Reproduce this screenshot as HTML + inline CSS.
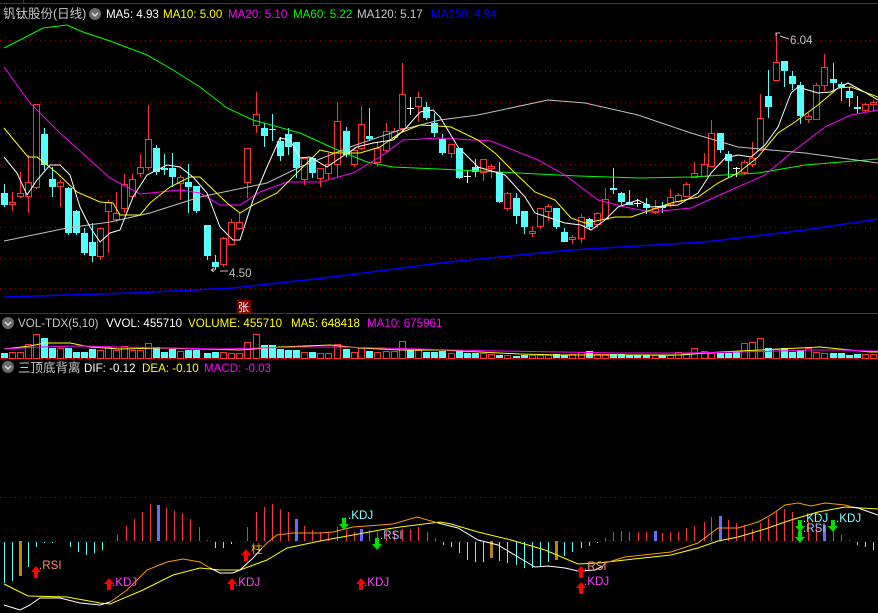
<!DOCTYPE html>
<html><head><meta charset="utf-8">
<style>
html,body{margin:0;padding:0;background:#000;width:878px;height:613px;overflow:hidden}
svg{display:block;font-family:"Liberation Sans","Noto Sans CJK SC",sans-serif}
</style></head>
<body>
<svg id="s" width="878" height="613" xmlns="http://www.w3.org/2000/svg">
<rect width="878" height="613" fill="#000"/>
<line x1="0" y1="3.5" x2="878" y2="3.5" stroke="#c00000"/>
<line x1="23.5" y1="0" x2="23.5" y2="4" stroke="#c00000"/>
<line x1="0" y1="313.5" x2="878" y2="313.5" stroke="#c00000"/>
<line x1="0" y1="358.5" x2="878" y2="358.5" stroke="#c00000"/>
<g id="g"></g>
<!-- header -->
<text x="3" y="18" font-size="12.5" fill="#c8c8c8">钒钛股份(日线)</text>
<circle cx="95" cy="14" r="6" fill="#6a6a6a"/><path d="M92 13l3 3 3-3" stroke="#ddd" stroke-width="1.4" fill="none"/>
<g font-size="11.6">
<text x="106" y="18" fill="#fff">MA5: 4.93</text>
<text x="163" y="18" fill="#ffff00">MA10: 5.00</text>
<text x="228" y="18" fill="#ff00ff">MA20: 5.10</text>
<text x="293" y="18" fill="#00ff00">MA60: 5.22</text>
<text x="357" y="18" fill="#c8c8c8">MA120: 5.17</text>
<text x="431" y="18" fill="#0000ff">MA250: 4.94</text>
<text x="229" y="277" fill="#c0c0c0">4.50</text>
<text x="790" y="44" fill="#c0c0c0">6.04</text>
</g>
<path d="M215 270h-4m0 0l3-2m-3 2l3 2M220 271h8" stroke="#c0c0c0" fill="none"/>
<path d="M776 36v-3h4M780 36l9 3" stroke="#c0c0c0" fill="none"/>
<rect x="237" y="300" width="14" height="13" fill="#800000"/>
<text x="238" y="311" font-size="11" fill="#fff">张</text>
<!-- vol header -->
<circle cx="8" cy="323" r="6" fill="#6a6a6a"/><path d="M5 322l3 3 3-3" stroke="#ddd" stroke-width="1.4" fill="none"/>
<g font-size="11.6">
<text x="18" y="327" fill="#c8c8c8">VOL-TDX(5,10)</text>
<text x="106" y="327" fill="#fff">VVOL: 455710</text>
<text x="188" y="327" fill="#ffff00">VOLUME: 455710</text>
<text x="291" y="327" fill="#ffff00">MA5: 648418</text>
<text x="367" y="327" fill="#ff00ff">MA10: 675961</text>
</g>
<circle cx="8" cy="367" r="6" fill="#6a6a6a"/><path d="M5 366l3 3 3-3" stroke="#ddd" stroke-width="1.4" fill="none"/>
<text x="18" y="372" font-size="12.5" fill="#c8c8c8">三顶底背离</text>
<g font-size="11.6">
<text x="84" y="372" fill="#fff">DIF: -0.12</text>
<text x="142" y="372" fill="#ffff00">DEA: -0.10</text>
<text x="204" y="372" fill="#ff00ff">MACD: -0.03</text>
</g>
<g id="m" font-size="11.6"></g>
</svg>
<script>
var g=document.getElementById('g'),h='';
function L(x1,y1,x2,y2,c,w,d){h+='<line x1="'+x1+'" y1="'+y1+'" x2="'+x2+'" y2="'+y2+'" stroke="'+c+'" stroke-width="'+(w||1)+'"'+(d?' stroke-dasharray="'+d+'"':'')+'/>';}
// grid
[40,71,102,133,164,196,227,258,288].forEach(function(y){L(0,y+.5,878,y+.5,'#a00000',1,'1 4');});
L(0,341.5,878,341.5,'#a00000',1,'1 4');
L(0,497.5,878,497.5,'#a00000',1,'1 4');
L(0,541.5,878,541.5,'#a00000',1,'1 4');
function P(pts,c,w){h+='<polyline points="'+pts+'" fill="none" stroke="'+c+'" stroke-width="'+(w||1)+'"/>';}
// candles: [x,type(r/c/w),top,bot,hi,lo]
var C=[[4,'c',193,205,184,207],[12,'r',202,204,192,211],[20,'r',193,196,172,198],[28,'r',182,196,155,213],[36,'r',104,187,104,189],[44,'c',134,165,128,170],[52,'c',179,187,167,197],[60,'r',182,186,180,207],[68,'c',188,233,187,235],[76,'c',211,233,210,235],[84,'c',233,253,228,255],[92,'c',242,256,223,262],[100,'r',228,256,228,260],[108,'r',202,211,200,253],[116,'r',213,219,192,222],[124,'r',184,208,174,213],[132,'r',179,196,174,198],[140,'r',167,173,154,177],[148,'r',139,167,105,170],[156,'c',148,172,145,175],[164,'c',168,170,154,175],[172,'c',168,177,153,187],[180,'r',177,183,175,200],[188,'c',182,187,164,213],[196,'c',186,211,186,213],[207,'c',225,256,225,260],[215,'c',262,267,255,270],[223,'r',238,264,237,267],[231,'r',222,244,219,245],[239,'r',222,228,213,230],[247,'r',148,182,148,198],[256,'r',114,125,92,133],[264,'c',128,136,123,147],[272,'c',129,130,114,141],[280,'c',141,156,137,161],[288,'c',134,147,128,155],[296,'c',142,168,142,178],[304,'r',158,179,158,185],[312,'c',158,173,157,178],[320,'r',168,178,168,187],[328,'r',164,173,153,180],[337,'r',121,164,102,178],[346,'c',131,155,127,157],[354,'r',150,164,147,167],[361,'r',124,148,106,150],[369,'c',136,139,108,141],[377,'r',148,162,142,167],[386,'r',131,150,123,153],[394,'r',131,137,128,140],[402,'r',94,128,63,132],[410,'w',108,108,97,115],[418,'r',97,106,92,122],[426,'c',107,118,102,120],[434,'c',123,133,113,137],[442,'c',139,153,134,155],[451,'r',144,153,144,158],[459,'c',148,178,148,179],[467,'w',176,176,171,183],[475,'c',167,172,159,177],[483,'r',159,172,159,181],[491,'r',166,168,164,178],[499,'c',172,202,162,203],[507,'r',193,208,192,211],[516,'c',198,216,193,224],[524,'c',211,227,211,234],[532,'r',231,233,226,237],[540,'r',208,226,208,229],[548,'r',206,211,204,221],[556,'c',208,227,208,229],[564,'c',232,242,228,242],[572,'r',237,239,235,244],[581,'r',217,238,214,243],[589,'c',219,227,218,230],[597,'r',213,224,212,228],[605,'r',199,219,188,220],[613,'c',188,190,168,194],[621,'c',193,202,192,205],[629,'c',202,205,190,205],[637,'w',203,203,199,207],[646,'c',204,208,198,214],[655,'r',208,212,200,214],[662,'c',206,208,202,213],[670,'r',197,204,189,207],[678,'r',195,201,193,203],[686,'r',184,196,182,197],[694,'r',173,177,162,177],[704,'r',164,176,153,177],[711,'r',133,166,120,167],[720,'c',133,150,133,153],[728,'c',154,161,151,177],[736,'w',168,168,167,177],[744,'r',162,172,160,175],[752,'r',158,164,142,167],[760,'r',118,150,94,151],[768,'c',96,107,70,118],[776,'r',62,80,33,81],[784,'c',61,71,61,87],[792,'c',76,84,71,90],[800,'c',85,116,82,124],[808,'r',116,119,113,123],[816,'r',85,119,83,120],[824,'r',67,85,54,91],[833,'c',79,83,63,90],[841,'c',84,87,82,101],[849,'c',91,98,87,107],[857,'c',107,109,96,113],[865,'r',104,110,103,112],[873,'r',102,104,100,112]];
var V=[353,352,352,344,334,338,348,348,348,352,352,349,350,347,350,346,350,350,343,347,352,349,351,350,350,353,352,352,353,353,342,334,345,345,349,350,350,352,352,353,353,344,349,352,347,351,352,351,351,341,350,350,352,352,351,353,351,353,353,353,354,355,355,356,355,355,355,355,354,355,354,352,351,354,354,354,354,355,355,355,355,355,355,352,353,348,351,353,353,353,351,343,342,338,348,349,348,352,350,348,352,353,353,353,355,354,354,354];
C.forEach(function(c,i){
 var x=c[0],col=c[1]=='r'?'#ff3232':(c[1]=='c'?'#54ffff':'#ffffff');
 if(c[1]=='r'){L(x+.5,c[4],x+.5,c[2],col);L(x+.5,c[3],x+.5,c[5],col);
  h+='<rect x="'+(x-2.5)+'" y="'+(c[2]+.5)+'" width="6" height="'+Math.max(c[3]-c[2],1)+'" fill="#000" stroke="'+col+'"/>';}
 else if(c[1]=='c'){L(x+.5,c[4],x+.5,c[5],col);h+='<rect x="'+(x-3)+'" y="'+c[2]+'" width="7" height="'+Math.max(c[3]-c[2],1)+'" fill="'+col+'"/>';}
 else {L(x+.5,c[4],x+.5,c[5],col);L(x-3,c[2]+.5,x+4,c[2]+.5,col);}
 var vt=V[i]||354;
 if(c[1]=='r') h+='<rect x="'+(x-2.5)+'" y="'+(vt+.5)+'" width="6" height="'+(358-vt)+'" fill="#000" stroke="#ff3232"/>';
 else h+='<rect x="'+(x-3)+'" y="'+vt+'" width="7" height="'+(358-vt)+'" fill="#54ffff"/>';
});
// MAs
P('4,48 20,40 43,28 67,25 83,32 110,41 147,55 173,70 200,87 227,108 253,120 300,133 333,148 367,162 393,167 438,169 518,173 578,176 638,178 691,177 758,173 805,165 878,159','#00ff00');
P('4,67 30,103 60,133 110,178 140,194 180,190 200,193 220,205 240,205 260,192 287,182 320,182 353,173 380,157 403,140 440,138 491,141 538,160 565,175 598,200 625,207 651,212 691,208 731,190 765,175 791,153 825,127 851,115 878,110','#ff00ff');
P('4,241 67,228 110,222 150,213 200,197 267,183 300,167 350,147 400,130 440,120 478,115 548,100 585,103 638,115 691,133 738,147 771,150 805,153 878,163','#c0c0c0');
P('4,297 133,293 233,288 333,277 440,263 571,250 705,242 805,230 878,219','#0000ff',1.5);
P('4,128 28,157 37,157 57,173 77,192 100,202 113,203 120,215 140,215 150,203 170,187 190,177 200,177 227,203 240,213 253,205 277,193 297,173 320,150 333,153 360,153 380,147 400,133 420,125 438,126 451,127 478,140 495,153 515,173 535,192 555,200 571,218 585,223 601,220 615,217 631,217 651,210 671,203 698,197 718,183 738,173 758,157 778,133 795,122 818,105 838,88 851,87 878,97','#ffff00');
P('4,157 17,173 27,195 37,180 50,165 60,165 70,175 80,207 90,227 100,242 110,233 120,230 133,197 147,175 167,165 180,167 193,177 207,193 220,227 233,240 240,240 253,200 267,167 280,138 290,140 300,158 310,157 327,167 337,160 357,147 373,143 393,140 407,127 420,112 433,110 440,117 458,147 478,167 505,175 525,197 535,213 565,223 581,225 591,230 605,220 618,207 638,200 651,207 678,205 698,193 711,173 725,158 738,155 751,157 765,145 778,127 791,93 798,87 818,93 831,92 848,83 861,90 878,100','#ffffff');
// vol MAs
P('4,349 30,346 45,343 70,343 90,347 120,349 160,348 200,349 240,350 280,347 330,345 360,348 400,350 440,350 480,352 520,354 560,355 600,355 640,355 680,355 720,352 760,350 800,348 820,347 840,349 870,352 878,352','#ffff00');
P('4,349 40,347 80,346 120,347 170,348 220,349 260,348 300,347 340,347 380,348 420,349 450,350 500,351 560,352 620,353 680,353 740,352 780,351 810,350 840,350 870,351 878,351','#ff00ff');
// MACD bars
var M=[[4,583,'c'],[12,581,'c'],[20,576,'b'],[28,567,'c'],[36,547,'c'],[44,543,'c'],[52,543,'c'],[70,547,'c'],[78,552,'c'],[86,555,'c'],[94,553,'c'],[102,550,'c'],[117,535],[126,526],[134,519],[142,512],[150,504],[158,505,'p'],[166,508],[174,511],[182,513],[190,519],[199,527],[207,540],[215,548,'c'],[223,548,'c'],[231,544,'c'],[247,527],[256,512],[264,507],[272,504],[280,509],[288,512],[296,519,'p'],[304,526],[312,530],[320,532],[328,532],[337,527],[346,530],[354,532],[361,529,'p'],[369,530],[377,532],[386,532],[394,532],[402,529],[410,529],[418,527],[427,532],[435,538],[443,545,'c'],[451,547,'c'],[459,553,'c'],[467,560,'c'],[475,562,'c'],[483,562,'c'],[491,558,'b'],[499,561,'c'],[507,563,'c'],[516,565,'c'],[524,568,'c'],[532,568,'c'],[540,567,'c'],[548,562,'c'],[556,560,'b'],[564,556,'c'],[572,552,'c'],[581,548,'c'],[589,546,'c'],[597,543,'c'],[605,538],[613,532],[621,531],[629,532],[638,532],[646,532],[655,531,'p'],[662,533],[670,532],[678,532],[686,528],[694,526],[704,522],[711,517],[720,516,'p'],[728,520],[736,523],[744,525],[752,529],[760,523],[768,518],[776,511],[784,509],[792,512],[800,520],[808,522],[816,523],[824,525,'p'],[833,525],[841,535],[849,540],[857,545,'c'],[865,547,'c'],[873,550,'c']];
M.forEach(function(b){var x=b[0]+.5,y=b[1],t=b[2];
 if(t=='b')h+='<rect x="'+(x-1.5)+'" y="541" width="3" height="'+(y-541)+'" fill="#b8860b"/>';
 else if(t=='p')h+='<rect x="'+(x-1.5)+'" y="'+y+'" width="3" height="'+(541-y)+'" fill="#6a6aff"/>';
 else if(t=='c')L(x,542,x,y,'#54ffff');
 else L(x,y,x,541,'#ff3232');});
P('4,584 28,596 67,597 100,603 110,604 143,590 173,575 200,568 220,570 240,570 267,560 287,548 320,541 353,535 380,530 400,527 440,522 451,524 478,532 511,540 545,550 578,564 598,563 625,560 671,555 698,548 718,541 738,537 765,529 791,520 818,512 845,507 878,509','#ffff00');
P('4,605 20,610 30,605 40,598 60,598 80,603 100,605 110,602','#ffffff');
P('110,602 113,600 127,590 147,570 167,562 183,559 200,562 210,568','#ff9900');
P('210,568 220,573 233,573 240,570 253,558 262,548','#ffffff');
P('262,548 267,543 277,535 293,533 320,533 333,532 353,527 393,524 417,517 438,523','#ff9900');
P('438,523 458,528 478,540 498,545 518,557 535,567 548,566 565,568 578,571 595,570 603,566','#ffffff');
P('603,566 605,563 625,557 671,552 698,543 718,528 738,528 758,522 771,515 785,505 798,503 811,506 825,503 845,505 852,507','#ff9900');
P('852,507 858,508 878,515','#ffffff');
g.innerHTML=h;
// markers
var m='';
function up(x,y){m+='<path d="M'+x+' '+y+'l-5 6h3v6h4v-6h3z" fill="#ff0000"/>';}
function dn(x,y){m+='<path d="M'+x+' '+y+'l-5 -6h3v-6h4v6h3z" fill="#00e000"/>';}
function T(x,y,t,c){m+='<text x="'+x+'" y="'+y+'" fill="'+c+'">'+t+'</text>';}
up(36,566);T(39,569,'.RSI','#ff8c69');
up(109,578);T(112,586,'.KDJ','#ff40ff');
up(232,578);T(235,586,'.KDJ','#ff40ff');
up(361,578);T(364,586,'.KDJ','#ff40ff');
up(246,549);T(251,553,'柱','#ffb000');
up(581,566);T(584,570,'.RSI','#ff8c69');
up(581,582);T(584,585,'.KDJ','#ff40ff');
dn(344,530);T(348,519,'.KDJ','#80ffff');
dn(377,550);T(380,539,'.RSI','#a0c8ff');
dn(800,532);dn(800,543);T(803,522,'.KDJ','#80ffff');T(803,532,'.RSI','#a0c8ff');
dn(833,532);T(836,522,'.KDJ','#80ffff');
document.getElementById('m').innerHTML=m;
</script>
</body></html>
